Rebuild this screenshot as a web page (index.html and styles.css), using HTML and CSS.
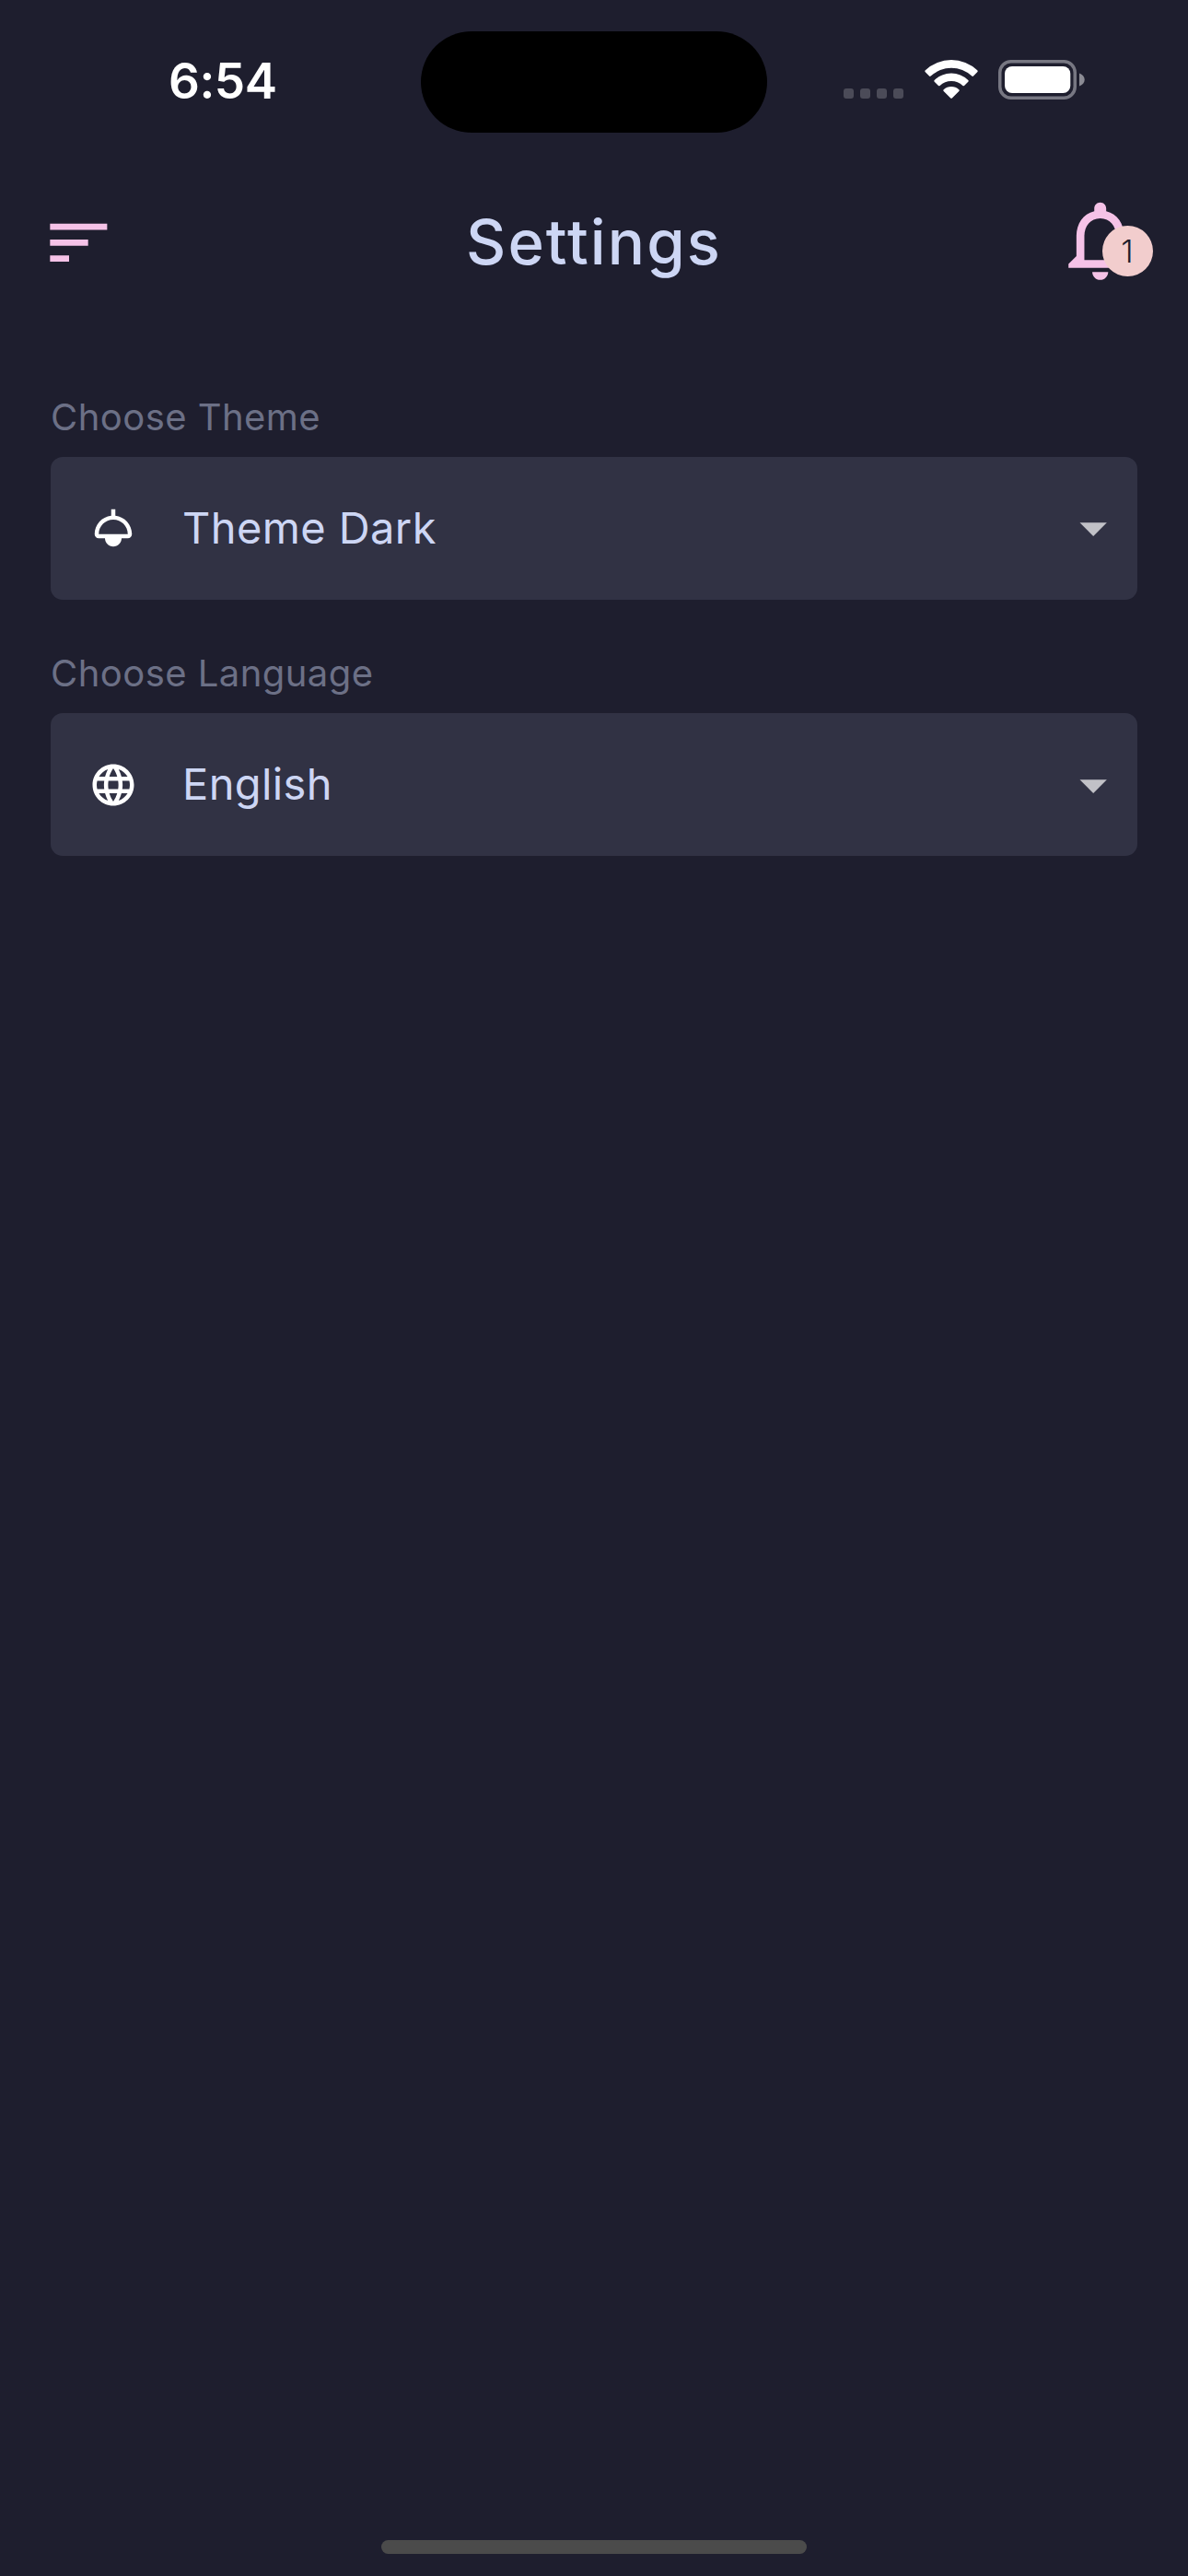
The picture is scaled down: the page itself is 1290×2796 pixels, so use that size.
FILE: index.html
```html
<!DOCTYPE html>
<html lang="en">
<head>
<meta charset="utf-8">
<title>Settings</title>
<link rel="stylesheet" href="styles.css">
</head>
<body>
<div class="screen">
  <div class="status">
    <div class="status-left"><span class="time">6:54</span></div>
    <div class="island"></div>
    <div class="status-right">
      <svg class="signal" viewBox="0 0 65 11"><rect width="11" height="11" rx="3"/><rect x="18" width="11" height="11" rx="3"/><rect x="36" width="11" height="11" rx="3"/><rect x="54" width="11" height="11" rx="3"/></svg>
      <svg class="wifi" viewBox="0 0 58 42"><path d="M0.8 13.2Q-.2 12.3.8 11.3A41 41 0 0 1 57.200 11.300Q58.200 12.300 57.200 13.200L53 17.600Q52.200 18.400 51.300 17.600A32.500 32.500 0 0 0 6.700 17.600Q5.800 18.400 5 17.600Z"/><path d="M10.700 23.700Q9.800 22.800 10.700 21.900A26.500 26.500 0 0 1 47.300 21.900Q48.200 22.800 47.300 23.700L43 28Q42.200 28.700 41.400 28A18 18 0 0 0 16.600 28Q15.800 28.700 15 28Z"/><path d="M20.700 34Q19.800 33 20.700 32.200A12.400 12.400 0 0 1 37.300 32.200Q38.200 33 37.300 34L29.800 41.500Q29 42.200 28.200 41.500Z"/></svg>
      <svg class="battery" viewBox="0 0 94 43"><rect class="shell" x="1.750" y="1.750" width="81.500" height="39.500" rx="12"/><rect class="charge" x="7" y="7" width="71.300" height="29" rx="8"/><path class="tip" d="M88 14.500c3.500 1.200 5.700 3.900 5.700 7s-2.200 5.800-5.700 7z"/></svg>
    </div>
  </div>

  <header class="appbar">
    <svg class="menu" viewBox="0 0 24 24"><path d="M3 18h6v-2H3v2zM3 6v2h18V6H3zm0 7h12v-2H3v2z"/></svg>
    <h1 class="title">Settings</h1>
    <div class="bell">
      <svg viewBox="0 0 24 24"><path d="M12 22c1.100 0 2-.9 2-2h-4c0 1.100.9 2 2 2zm6-6v-5c0-3.070-1.630-5.640-4.500-6.320V4c0-.83-.67-1.500-1.500-1.500s-1.500.67-1.500 1.500v.68C7.640 5.360 6 7.920 6 11v5l-2 2v1h16v-1l-2-2zm-2 1H8v-6c0-2.480 1.510-4.500 4-4.500s4 2.020 4 4.500v6z"/></svg>
      <span class="badge">1</span>
    </div>
  </header>

  <main class="form">
    <section class="field">
      <h2 class="label">Choose Theme</h2>
      <div class="select">
        <svg class="lead" viewBox="0 0 24 24"><path fill-rule="evenodd" d="M13 6.060V3h-2v3.060C6.500 6.560 3 10.370 3 15c0 1.100.9 2 2 2h3c0 2.210 1.790 4 4 4s4-1.790 4-4h3c1.100 0 2-.9 2-2 0-4.630-3.500-8.440-8-8.940zM5 15c0-3.860 3.140-7 7-7s7 3.140 7 7H5z"/></svg>
        <span class="value">Theme Dark</span>
        <svg class="arrow" viewBox="0 0 24 24"><path d="M7 10l5 5 5-5z"/></svg>
      </div>
    </section>
    <section class="field">
      <h2 class="label">Choose Language</h2>
      <div class="select">
        <svg class="lead" viewBox="0 0 24 24"><path d="M11.990 2C6.470 2 2 6.480 2 12s4.470 10 9.990 10C17.520 22 22 17.520 22 12S17.520 2 11.990 2zm6.930 6h-2.950c-.32-1.250-.78-2.450-1.380-3.560 1.840.63 3.370 1.910 4.330 3.560zM12 4.040c.83 1.200 1.480 2.530 1.910 3.960h-3.820c.43-1.430 1.080-2.760 1.910-3.960zM4.260 14C4.100 13.360 4 12.690 4 12s.1-1.360.26-2h3.380c-.08.66-.14 1.320-.14 2s.06 1.340.14 2H4.260zm.82 2h2.950c.32 1.250.78 2.450 1.380 3.560-1.840-.63-3.370-1.900-4.330-3.560zm2.950-8H5.080c.96-1.660 2.490-2.930 4.330-3.560C8.810 5.550 8.350 6.750 8.030 8zM12 19.960c-.83-1.200-1.480-2.530-1.910-3.960h3.820c-.43 1.430-1.080 2.760-1.910 3.960zM14.340 14H9.660c-.09-.66-.16-1.320-.16-2s.07-1.350.16-2h4.680c.09.65.16 1.320.16 2s-.07 1.340-.16 2zm.25 5.560c.6-1.110 1.060-2.310 1.380-3.560h2.950c-.96 1.650-2.490 2.930-4.330 3.560zM16.360 14c.08-.66.14-1.320.14-2s-.06-1.340-.14-2h3.380c.16.640.26 1.310.26 2s-.1 1.360-.26 2h-3.380z"/></svg>
        <span class="value">English</span>
        <svg class="arrow" viewBox="0 0 24 24"><path d="M7 10l5 5 5-5z"/></svg>
      </div>
    </section>
  </main>

  <div class="home"></div>
</div>
</body>
</html>
```
FILE: styles.css
```css
* { box-sizing: border-box; }
body {
  margin: 0;
  background: #1e1e2e;
  color: #cdd6f4;
  font-family: Inter, "Liberation Sans", sans-serif;
}
svg { display: block; flex: none; }
h1, h2 { margin: 0; }

.screen {
  width: 1290px;
  height: 2796px;
  display: flex;
  flex-direction: column;
  overflow: hidden;
}

/* Status bar */
.status {
  height: 177px;
  display: grid;
  grid-template-columns: 457px 376px 457px;
  align-items: start;
}
.status-left { padding: 57px 0 0 183px; }
.time {
  display: block;
  font-size: 53px;
  line-height: 62px;
  font-weight: 600;
  color: #fff;
  letter-spacing: -0.500px;
}
.island {
  height: 110.500px;
  margin-top: 33.500px;
  border-radius: 56px;
  background: #000;
}
.status-right {
  display: flex;
  align-items: flex-end;
  padding: 65px 0 0 83px;
  height: 108px;
}
.signal { width: 65px; height: 11px; margin-bottom: 1px; fill: #4b4b58; }
.wifi { width: 58px; height: 42px; margin: 0 0 1px 22.500px; fill: #fff; }
.battery { width: 94px; height: 43px; margin-left: 22.500px; }
.shell { fill: none; stroke: #777782; stroke-width: 3.500px; }
.charge { fill: #fff; }
.tip { fill: #8b8b94; }

/* App bar */
.appbar {
  height: 171px;
  padding: 0 44px;
  display: grid;
  grid-template-columns: 1fr auto 1fr;
  align-items: center;
}
.menu { width: 82.700px; height: 82.700px; margin-top: 1px; fill: #f5c2e7; }
.title {
  font-size: 67px;
  line-height: 80px;
  font-weight: 500;
  letter-spacing: 2.100px;
}
.bell {
  position: relative;
  justify-self: end;
  width: 103.400px;
  height: 103.400px;
  margin-top: -4px;
}
.bell svg { width: 100%; height: 100%; fill: #f5c2e7; }
.badge {
  position: absolute;
  left: 54.700px;
  top: 36.500px;
  width: 55.200px;
  height: 55.200px;
  padding-right: 2px;
  border-radius: 50%;
  background: #f2cdcd;
  color: #1e1e2e;
  font-size: 34px;
  font-weight: 300;
  line-height: 55px;
  text-align: center;
}

/* Settings form */
.form {
  padding: 76px 55px 0;
  display: flex;
  flex-direction: column;
  gap: 51.500px;
}
.field { display: flex; flex-direction: column; }
.label {
  height: 72px;
  padding-top: 5px;
  font-size: 40px;
  line-height: 48px;
  font-weight: 400;
  color: #6c7086;
  letter-spacing: 0.450px;
}
.select {
  height: 154.800px;
  padding: 0 13px 0 41px;
  display: flex;
  align-items: center;
  border-radius: 13px;
  background: #313244;
}
.lead { width: 54px; height: 54px; margin-right: 48px; fill: #fff; }
.value {
  flex: 1;
  margin-top: -1px;
  font-size: 47px;
  line-height: 56px;
  letter-spacing: 0.400px;
}
.arrow { width: 70.400px; height: 70.400px; fill: #c1c1c7; }

/* Home indicator */
.home {
  width: 462px;
  height: 15px;
  margin: auto auto 24px;
  border-radius: 8px;
  background: #4b4b4b;
}
```
